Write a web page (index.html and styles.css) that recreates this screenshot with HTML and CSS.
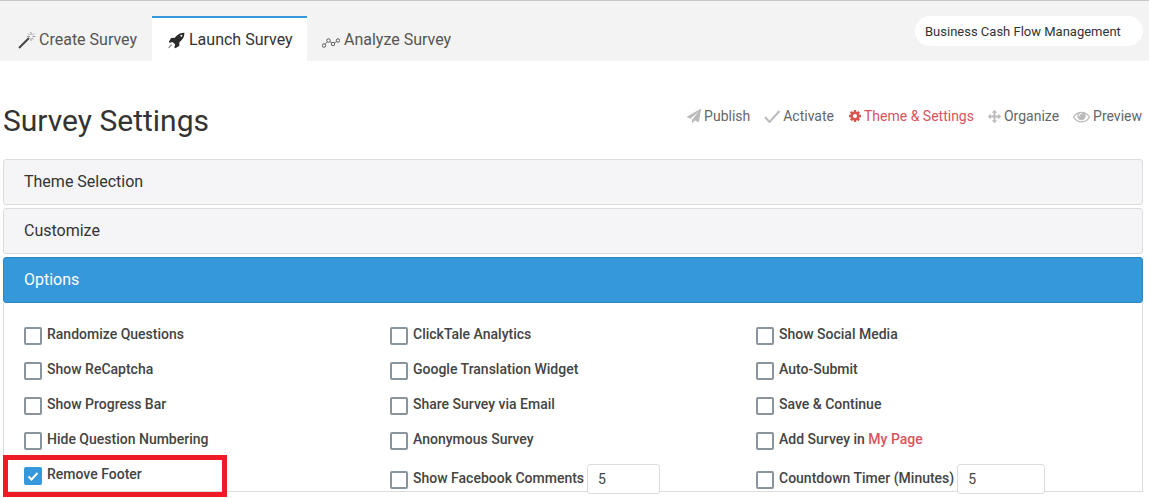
FILE: index.html
```html
<!DOCTYPE HTML>
<html lang="en">
<head>
  <meta charset="UTF-8">
  <title>Survey Settings</title>
  <link rel="stylesheet" href="styles.css">
</head>
<body>
  <div class="topbar">
    <div class="tabs">
      <a class="tab tab1" href="#">
        <svg class="tabIcon" width="18" height="18" viewBox="0 0 18 18">
          <path d="M1 17 L11 7" stroke="#444" stroke-width="2" fill="none"/>
          <path d="M13 1v3M13 7v3M9 5.500h3M14.500 5.500h3M10 2.500l1.500 1.500M16 2.500l-1.500 1.500M15.500 8.500l-1.500-1.500" stroke="#999" stroke-width="1" fill="none"/>
        </svg>
        Create Survey
      </a>
      <a class="tab tab2 active" href="#">
        <svg class="tabIcon" width="17" height="18" viewBox="0 0 1792 1792">
          <path d="M1504 448q0-40-28-68t-68-28-68 28-28 68 28 68 68 28 68-28 28-68zm224-288q0 249-75.500 430.500t-253.500 360.500q-81 80-195 176l-20 379q-2 16-16 26l-384 224q-7 4-16 4-12 0-23-9l-64-64q-13-14-8-32l85-276-281-281-276 85q-3 1-9 1-14 0-23-9l-64-64q-17-19-5-39l224-384q10-14 26-16l379-20q96-114 176-195 188-187 358-258t431-71q14 0 24 9.500t10 22.500z" fill="#2b2b2b"/>
          <path d="M60 1720 L380 1400" stroke="#888" stroke-width="130" fill="none"/>
        </svg>
        Launch Survey
      </a>
      <a class="tab tab3" href="#">
        <svg class="tabIcon" width="18" height="18" viewBox="0 0 18 18">
          <path d="M2 14.500 L6.500 9.500 L11 13 L16 9.500" stroke="#777" stroke-width="1" fill="none"/>
          <circle cx="2" cy="14.500" r="1.700" fill="#fff" stroke="#555"/>
          <circle cx="6.500" cy="9.500" r="1.700" fill="#fff" stroke="#555"/>
          <circle cx="11" cy="13" r="1.700" fill="#fff" stroke="#555"/>
          <circle cx="16" cy="9.500" r="1.700" fill="#fff" stroke="#555"/>
        </svg>
        Analyze Survey
      </a>
    </div>
    <div class="surveyName">Business Cash Flow Management</div>
  </div>

  <div class="titleRow">
    <h1 class="pageTitle">Survey Settings</h1>
    <div class="steps">
      <a class="step" href="#">
        <svg width="14" height="14" viewBox="0 0 1792 1792"><path d="M1764 11q33 24 27 64l-256 1536q-5 29-32 45-14 8-31 8-11 0-24-5l-453-185-242 295q-18 23-49 23-13 0-22-4-19-7-30.500-23.500t-11.500-36.500v-349l864-1059-1069 925-395-162q-37-14-40-55-2-40 32-59l1664-960q15-9 32-9 20 0 36 11z" fill="#bbb"/></svg>
        Publish
      </a>
      <a class="step" href="#">
        <svg width="16" height="13" viewBox="0 0 16 13"><path d="M1 7 L5.500 12 L15.500 1" stroke="#bbb" stroke-width="2" fill="none"/></svg>
        Activate
      </a>
      <a class="step current" href="#">
        <svg width="13" height="14" viewBox="0 0 1664 1792"><path d="M1152 896q0-106-75-181t-181-75-181 75-75 181 75 181 181 75 181-75 75-181zm512-109v222q0 12-8 23t-20 13l-185 28q-19 54-39 91 35 50 107 138 10 12 10 25t-9 23q-27 37-99 108t-94 71q-12 0-26-9l-138-108q-44 23-91 38-16 136-29 186-7 28-36 28h-222q-14 0-24.500-8.500t-11.500-21.500l-28-184q-49-16-90-37l-141 107q-10 9-25 9-14 0-25-11-126-114-165-168-7-10-7-23 0-12 8-23 15-21 51-66.500t54-70.500q-27-50-41-99l-183-27q-13-2-21-12.500t-8-23.500v-222q0-12 8-23t19-13l186-28q14-46 39-92-40-57-107-138-10-12-10-24 0-10 9-23 26-36 98.500-107.500t94.500-71.500q13 0 26 10l138 107q44-23 91-38 16-136 29-186 7-28 36-28h222q14 0 24.500 8.500t11.500 21.500l28 184q49 16 90 37l142-107q9-9 24-9 13 0 25 10 129 119 165 170 7 8 7 22 0 12-8 23-15 21-51 66.500t-54 70.500q26 50 41 98l183 28q13 2 21 12.500t8 23.500z" fill="#d9534f"/></svg>
        Theme &amp; Settings
      </a>
      <a class="step" href="#">
        <svg width="13" height="13" viewBox="0 0 1792 1792"><path d="M1792 896q0 26-19 45l-256 256q-19 19-45 19t-45-19-19-45v-128h-384v384h128q26 0 45 19t19 45-19 45l-256 256q-19 19-45 19t-45-19l-256-256q-19-19-19-45t19-45 45-19h128v-384h-384v128q0 26-19 45t-45 19-45-19l-256-256q-19-19-19-45t19-45l256-256q19-19 45-19t45 19 19 45v128h384v-384h-128q-26 0-45-19t-19-45 19-45l256-256q19-19 45-19t45 19l256 256q19 19 19 45t-19 45-45 19h-128v384h384v-128q0-26 19-45t45-19 45 19l256 256q19 19 19 45z" fill="#bbb"/></svg>
        Organize
      </a>
      <a class="step" href="#">
        <svg width="17" height="17" viewBox="0 0 1792 1792"><path d="M1664 960q-152-236-381-353 61 104 61 225 0 185-131.500 316.500t-316.500 131.500-316.500-131.500-131.500-316.500q0-121 61-225-229 117-381 353 133 205 333.500 326.500t434.500 121.500 434.500-121.500 333.500-326.500zm-720-384q0-20-14-34t-34-14q-125 0-214.500 89.500t-89.500 214.500q0 20 14 34t34 14 34-14 14-34q0-86 61-147t147-61q20 0 34-14t14-34zm848 384q0 34-20 69-140 230-376.500 368.500t-499.500 138.500-499.500-139-376.500-368q-20-35-20-69t20-69q140-229 376.500-368t499.500-139 499.500 139 376.500 368q20 35 20 69z" fill="#bbb"/></svg>
        Preview
      </a>
    </div>
  </div>

  <div class="accordion">
    <div class="panelHead">Theme Selection</div>
    <div class="panelHead">Customize</div>
    <div class="panelHead open">Options</div>
    <div class="panelBody">
      <div class="optCol">
        <label class="opt"><span class="box"></span>Randomize Questions</label>
        <label class="opt"><span class="box"></span>Show ReCaptcha</label>
        <label class="opt"><span class="box"></span>Show Progress Bar</label>
        <label class="opt"><span class="box"></span>Hide Question Numbering</label>
        <label class="opt">
          <span class="box checked">
            <svg width="18" height="18" viewBox="0 0 18 18"><path d="M4.500 9.500 L7.500 12.500 L13.500 6" stroke="#fff" stroke-width="2" fill="none"/></svg>
          </span>Remove Footer
        </label>
      </div>
      <div class="optCol">
        <label class="opt"><span class="box"></span>ClickTale Analytics</label>
        <label class="opt"><span class="box"></span>Google Translation Widget</label>
        <label class="opt"><span class="box"></span>Share Survey via Email</label>
        <label class="opt"><span class="box"></span>Anonymous Survey</label>
        <label class="opt withInput"><span class="box"></span>Show Facebook Comments<input class="num" type="text" value="5"></label>
      </div>
      <div class="optCol">
        <label class="opt"><span class="box"></span>Show Social Media</label>
        <label class="opt"><span class="box"></span>Auto-Submit</label>
        <label class="opt"><span class="box"></span>Save &amp; Continue</label>
        <label class="opt"><span class="box"></span>Add Survey in&nbsp;<a class="myPage" href="#">My Page</a></label>
        <label class="opt withInput"><span class="box"></span>Countdown Timer (Minutes)<input class="num wide" type="text" value="5"></label>
      </div>
    </div>
  </div>

  <div class="highlight"></div>
</body>
</html>
```

FILE: styles.css
```css
html, body {
  height: 498px;
  overflow: hidden;
}

body {
  margin: 0;
  position: relative;
  font-family: Roboto, "Liberation Sans", sans-serif;
  color: #333;
  background-color: white;
}

a {
  text-decoration: none;
  color: inherit;
}

.topbar {
  display: flex;
  justify-content: space-between;
  height: 60px;
  background-color: #f3f3f3;
  border-top: 1px solid #c8c8c8;
}

.tabs {
  display: flex;
  padding-top: 15px;
}

.tab {
  display: flex;
  align-items: center;
  gap: 3px;
  height: 43px;
  border-top: 2px solid transparent;
  font-size: 16px;
  color: #555;
}

.tab1 {
  width: 134px;
  padding-left: 18px;
}

.tab2 {
  width: 139px;
  padding-left: 16px;
  gap: 4px;
}

.tab3 {
  padding-left: 15px;
  gap: 4px;
}

.tab.active {
  background-color: white;
  border-top-color: #3498db;
  color: #333;
}

.surveyName {
  align-self: flex-start;
  box-sizing: border-box;
  width: 228px;
  height: 30px;
  margin: 15px 6px 0 0;
  padding: 1px 0 0 10px;
  border-radius: 15px;
  background-color: white;
  font-size: 13px;
  line-height: 30px;
}

.titleRow {
  display: flex;
  justify-content: space-between;
  height: 98px;
  padding: 0 7px 0 3px;
}

.pageTitle {
  margin: 41px 0 0;
  font-size: 30px;
  font-weight: 400;
  line-height: 38px;
}

.steps {
  display: flex;
  gap: 14px;
  padding-top: 46px;
  font-size: 14px;
  line-height: 18px;
  color: #666;
}

.step {
  display: flex;
  align-items: center;
  gap: 3px;
  height: 18px;
}

.step.current {
  color: #d9535f;
}

.accordion {
  margin: 0 6px 0 3px;
}

.panelHead {
  height: 44px;
  margin-bottom: 3px;
  padding-left: 20px;
  border: 1px solid #ddd;
  border-radius: 3px;
  background-color: #f5f5f7;
  font-size: 16px;
  line-height: 44px;
}

.panelHead.open {
  margin-bottom: 0;
  border-color: #2f86c4;
  background-color: #3498db;
  color: white;
}

.panelBody {
  display: grid;
  grid-template-columns: repeat(3, 366px);
  padding: 22px 0 0 20px;
  border: 1px solid #ddd;
  border-top: 0;
}

.optCol {
  display: flex;
  flex-direction: column;
  gap: 17px;
}

.opt {
  display: flex;
  align-items: flex-start;
  height: 18px;
  font-size: 14px;
  font-weight: 500;
  line-height: 18px;
  color: #444;
}

.box {
  flex: none;
  box-sizing: border-box;
  width: 18px;
  height: 18px;
  margin: 2px 5px 0 0;
  border: 2px solid #8a949c;
  border-radius: 2px;
  background-color: white;
}

.box.checked {
  border: 0;
  background-color: #3498db;
}

.box.checked svg {
  display: block;
}

.withInput {
  align-items: center;
  height: 26px;
}

.withInput .box {
  margin-top: 4px;
}

.num {
  box-sizing: border-box;
  width: 73px;
  height: 30px;
  margin: -1px 0 -3px 3px;
  padding: 0 10px;
  border: 1px solid #ddd;
  border-radius: 3px;
  font-family: Roboto, "Liberation Sans", sans-serif;
  font-size: 14px;
  color: #444;
}

.num.wide {
  width: 88px;
}

.myPage {
  color: #d9535f;
}

.highlight {
  position: absolute;
  left: 3px;
  top: 455px;
  box-sizing: border-box;
  width: 224px;
  height: 42px;
  border: 5px solid #ed1c24;
}
```
